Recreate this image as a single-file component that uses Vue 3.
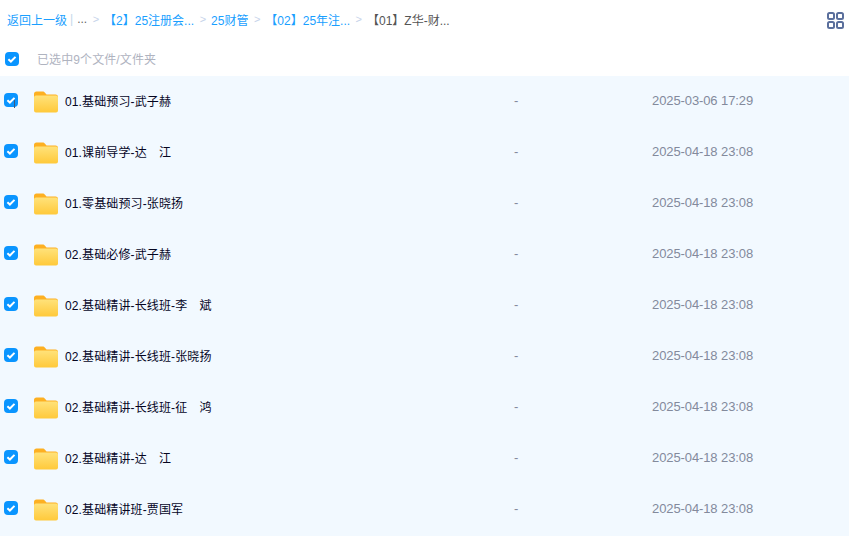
<template>
  <div class="page">
    <div class="crumbs">
      <a class="link">返回上一级</a>
      <span class="sep">|</span>
      <span class="dots">...</span>
      <template v-for="c in crumbs" :key="c">
        <span class="arrow">&gt;</span>
        <a class="link">{{ c }}</a>
      </template>
      <span class="arrow">&gt;</span>
      <span class="current">【01】Z华-财...</span>
      <svg class="grid-icon" width="17" height="17" viewBox="0 0 17 17" fill="none" stroke="#5a6f9c" stroke-width="2">
        <rect x="1" y="1" width="6" height="6" rx="1.5" />
        <rect x="10" y="1" width="6" height="6" rx="1.5" />
        <rect x="1" y="10" width="6" height="6" rx="1.5" />
        <rect x="10" y="10" width="6" height="6" rx="1.5" />
      </svg>
    </div>

    <div class="select-bar">
      <span class="check head-check"><svg width="14" height="14" viewBox="0 0 14 14"><path d="M3.4 7.2l2.5 2.3 4.6-4.6" fill="none" stroke="#fff" stroke-width="2" /></svg></span>
      <span class="select-text">已选中9个文件/文件夹</span>
    </div>

    <div class="list">
      <div v-for="(row, i) in rows" :key="row.name + row.time" class="row">
        <span class="check row-check" :class="{ 'has-caret': i === 0 }"><svg width="14" height="14" viewBox="0 0 14 14"><path d="M3.4 7.2l2.5 2.3 4.6-4.6" fill="none" stroke="#fff" stroke-width="2" /></svg></span>
        <svg class="folder" width="24" height="22" viewBox="0 0 24 22">
          <path d="M0 3a2.500 2.500 0 0 1 2.500-2.500h6c1.200 0 1.800.5 2.500 1.300L12.500 3.500H21.500A2.500 2.500 0 0 1 24 6v6H0z" fill="#fdb022" />
          <path d="M0 6.500a2 2 0 0 1 2-2h20a2 2 0 0 1 2 2V19.500a2 2 0 0 1-2 2H2a2 2 0 0 1-2-2z" fill="url(#fold)" />
          <defs>
            <linearGradient id="fold" x1="0" y1="0" x2="0" y2="1">
              <stop offset="0" stop-color="#ffe27a" />
              <stop offset="1" stop-color="#ffc93a" />
            </linearGradient>
          </defs>
        </svg>
        <span class="name">{{ row.name }}</span>
        <span class="size">-</span>
        <span class="time">{{ row.time }}</span>
      </div>
    </div>
  </div>
</template>

<script setup>
const crumbs = ['【2】25注册会...', '25财管', '【02】25年注...']

const rows = [
  { name: '01.基础预习-武子赫', time: '2025-03-06 17:29' },
  { name: '01.课前导学-达　江', time: '2025-04-18 23:08' },
  { name: '01.零基础预习-张晓扬', time: '2025-04-18 23:08' },
  { name: '02.基础必修-武子赫', time: '2025-04-18 23:08' },
  { name: '02.基础精讲-长线班-李　斌', time: '2025-04-18 23:08' },
  { name: '02.基础精讲-长线班-张晓扬', time: '2025-04-18 23:08' },
  { name: '02.基础精讲-长线班-征　鸿', time: '2025-04-18 23:08' },
  { name: '02.基础精讲-达　江', time: '2025-04-18 23:08' },
  { name: '02.基础精讲班-贾国军', time: '2025-04-18 23:08' },
]
</script>

<style>
html, body { margin: 0; background: #fff; overflow: hidden; }
</style>

<style scoped>
.page { width: 849px; height: 536px; overflow: hidden; font-family: "Liberation Sans", "Noto Sans CJK SC", sans-serif; font-size: 12px; }
.crumbs { height: 40px; box-sizing: border-box; display: flex; align-items: center; padding: 0 5px 2px 7px; white-space: nowrap; }
.link { color: #1a9fff; }
.sep { color: #c4d8ea; margin: 0 4px 0 3px; }
.dots { color: #666; }
.arrow { color: #c6d3ea; margin: 0 5px 0 5.5px; font-size: 11px; }
.current { color: #555; }
.grid-icon { margin-left: auto; margin-top: 2px; }
.select-bar { height: 36px; display: flex; align-items: center; padding-left: 5px; }
.select-text { margin-left: 18px; color: #afb3bf; letter-spacing: 0.1px; }
.check { width: 14px; height: 14px; border-radius: 4px; background: #0a95ff; display: flex; flex: none; position: relative; }
.head-check { margin-top: 2px; }
.row-check { margin-top: -1px; }
.has-caret::after { content: ""; position: absolute; left: 10px; top: 7px; width: 1px; height: 8px; background: #3d5a80; }
.list { background: #f2f9ff; height: 460px; }
.row { height: 51px; box-sizing: border-box; display: flex; align-items: center; padding: 0 0 2px 4px; }
.folder { margin: 3px 0 0 16px; flex: none; }
.name { margin-left: 7px; width: 449px; color: #05051f; flex: none; letter-spacing: 0.13px; }
.size { width: 138px; color: #838a9c; font-size: 13px; flex: none; }
.time { color: #838a9c; font-size: 13px; letter-spacing: -0.1px; }
</style>
